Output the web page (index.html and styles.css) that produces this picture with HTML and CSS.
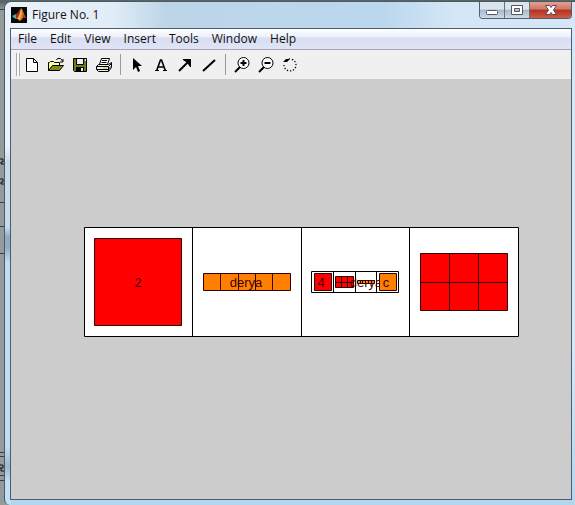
FILE: index.html
```html
<!DOCTYPE html>
<html lang="en">
<head>
<meta charset="utf-8">
<title>Figure No. 1</title>
<link rel="stylesheet" href="styles.css">
</head>
<body>
<div class="desktop">
  <svg class="backdrop" width="12" height="505" aria-hidden="true">
    <path d="M0 9.500H4M0 202.500H4M0 226.500H4M0 253.500H4M0 452.500H4M0 456.500H4M0 475.500H4M0 480.500H4" stroke="#3a3f42"/>
    <path d="M0 159h3v3h-2v2h3M0 179h3v3h-2v2h3M0 465h3v3h-3M1 468v3h3" fill="none" stroke="#111"/>
  </svg>
  <main class="window">
    <header class="titlebar">
      <svg class="logo" width="16" height="16" viewBox="0 0 16 16" aria-hidden="true">
        <path d="M0 0h16v16H0z" fill="#080808"/>
        <path d="M1 9l4-2 2 1-2 4-2-1z" fill="#4fa6ad"/>
        <path d="M5 7c2-1 3-4 5-6l-2 8-3 3z" fill="#8e3522"/>
        <path d="M10 1c2 2 3 7 5 10-2-1-3-1-4 1-1 1-2 2-3 2 0-2-1-2-3-2 3-2 4-7 5-11z" fill="#e8822b"/>
        <path d="M10 2c1 2 0 8-2 11l-1-2c2-2 2-6 3-9z" fill="#f5bd55"/>
        <path d="M11 3c1 3 2 6 4 8-2-1-3-1-4 1 1-3 1-6 0-9z" fill="#b83c20"/>
      </svg>
      <h1 class="title">Figure No. 1</h1>
      <div class="controls">
        <button class="control" aria-label="Minimize"><svg width="14" height="14" viewBox="0 0 14 14"><rect x="1.500" y="7.500" width="11" height="4" rx="1" fill="#fff" stroke="#535666"/></svg></button>
        <button class="control" aria-label="Maximize"><svg width="14" height="14" viewBox="0 0 14 14"><path fill-rule="evenodd" d="M1.500 2.500h11v9h-11zM4.500 5.500v3h5v-3z" fill="#fff" stroke="#535666"/></svg></button>
        <button class="control close" aria-label="Close"><svg width="14" height="14" viewBox="0 0 14 14"><path d="M1.500 2.500h4L7 4.500l1.500-2h4L9.500 7l3 4.500h-4L7 9.500l-1.500 2h-4L4.500 7z" fill="#fff" stroke="#63474a"/></svg></button>
      </div>
    </header>
    <div class="client">
      <nav class="menu">
        <button class="item">File</button>
        <button class="item">Edit</button>
        <button class="item">View</button>
        <button class="item">Insert</button>
        <button class="item">Tools</button>
        <button class="item">Window</button>
        <button class="item">Help</button>
      </nav>
      <div class="toolbar" role="toolbar" aria-label="Figure tools">
        <span class="grip"></span>
        <div class="group">
          <button class="tool" aria-label="New"><svg width="16" height="16" viewBox="0 0 16 16"><path d="M2.500 1.500h7l4 4v9h-11z" fill="#fff" stroke="#000"/><path d="M9.500 1.500v4h4" fill="none" stroke="#000"/></svg></button>
          <button class="tool" aria-label="Open"><svg width="16" height="16" viewBox="0 0 16 16"><path d="M.5 13.500v-8h1l1-1h3l1 1h5v3" fill="#ffff9c" stroke="#000"/><path d="M.5 13.500l4-5h11l-4 5z" fill="#8a8a18" stroke="#000"/><path d="M8.500 3l1-1.500h3l2 2.500M15 2v3h-3" fill="none" stroke="#000"/></svg></button>
          <button class="tool" aria-label="Save"><svg width="16" height="16" viewBox="0 0 16 16"><path d="M1.500 1.500h13v13h-12l-1-1z" fill="#77771c" stroke="#000"/><path d="M4.500 1.500h7v6h-7z" fill="#eee" stroke="#000"/><path d="M4 10h8v5H4z" fill="#000"/><path d="M9 11h2v3H9zM13 2h1v2h-1z" fill="#eee"/></svg></button>
          <button class="tool" aria-label="Print"><svg width="16" height="16" viewBox="0 0 16 16"><path d="M3.500 7.500l2-6h8l-2 6" fill="#fff" stroke="#000"/><path d="M6 3.500h5M5.500 5.500h5" stroke="#000"/><path d="M.5 9.500l2-2h10l3-2v5l-3 4h-10l-2-2z" fill="#eee" stroke="#000"/><path d="M.5 9.500h12l3-3M1 12.500h11l3-3M12.500 10v4" fill="none" stroke="#000"/><path d="M7 11h4" stroke="#c5c52c"/></svg></button>
        </div>
        <span class="separator"></span>
        <div class="group">
          <button class="tool" aria-label="Select"><svg width="16" height="16" viewBox="0 0 16 16"><path d="M4 1v12l3-3 2 5 2-1-2-5h4z"/></svg></button>
          <button class="tool" aria-label="Text"><svg width="16" height="16" viewBox="0 0 16 16"><path d="M3.500 14L7.500 3h1L12.500 14M5 10h6" fill="none" stroke="#000" stroke-width="1.600"/><path d="M2 13h4v1H2zM10 13h4v1h-4z"/></svg></button>
          <button class="tool" aria-label="Arrow"><svg width="16" height="16" viewBox="0 0 16 16"><path d="M2 14L12 4" stroke="#000" stroke-width="2"/><path d="M6 2h8v8h-1l-2-3-2-2-3-2z"/></svg></button>
          <button class="tool" aria-label="Line"><svg width="16" height="16" viewBox="0 0 16 16"><path d="M2 14L14 3" stroke="#000" stroke-width="2"/></svg></button>
        </div>
        <span class="separator"></span>
        <div class="group">
          <button class="tool" aria-label="Zoom in"><svg width="16" height="16" viewBox="0 0 16 16"><circle cx="9.500" cy="6" r="5.500" fill="#fff" stroke="#000"/><path d="M1 15l5-5" stroke="#000" stroke-width="2"/><path d="M6.500 6h6M9.500 3v6" stroke="#000" stroke-width="2"/></svg></button>
          <button class="tool" aria-label="Zoom out"><svg width="16" height="16" viewBox="0 0 16 16"><circle cx="9.500" cy="6" r="5.500" fill="#fff" stroke="#000"/><path d="M1 15l5-5" stroke="#000" stroke-width="2"/><path d="M6.500 6h6" stroke="#000" stroke-width="2"/></svg></button>
          <button class="tool" aria-label="Rotate"><svg width="16" height="16" viewBox="0 0 16 16"><path d="M4 3.500A6 6 0 1 1 2 8" fill="none" stroke="#000" stroke-width="1.300" stroke-dasharray="1.300 1.800"/><path d="M1 5l3-3h3v1L5 5z"/></svg></button>
        </div>
      </div>
      <section class="figure">
        <svg class="plot" width="435" height="110" viewBox="0 0 435 110" role="img" aria-label="Figure drawing">
          <g class="panel">
            <path d="M.5.5h434v109H.5zM108.500.5v109M217.500.5v109M325.500.5v109"/>
            <path d="M227.500 44.500h87v21h-87zM249.500 44.500v21M271.500 44.500v21M292.500 44.500v21"/>
          </g>
          <g class="red">
            <path d="M10.500 11.500h87v87h-87z"/>
            <path d="M230.500 46.500h17v17h-17z"/>
            <path d="M251.500 49.500h18v11h-18zM257.500 49.500v11M263.500 49.500v11M251.500 55.500h18"/>
            <path d="M336.500 26.500h87v57h-87zM365.500 26.500v57M394.500 26.500v57M336.500 55.500h87"/>
          </g>
          <path class="orange" d="M119.500 46.500h87v17h-87zM136.500 46.500v17M154.500 46.500v17M171.500 46.500v17M188.500 46.500v17"/>
          <text class="label" x="282" y="60">derya</text>
          <path class="orange" d="M273.500 53.500h17v3h-17zM276.500 53v4M278.500 53v4M281.500 53v4M284.500 53v4M287.500 53v4"/>
          <path class="orange" d="M295.500 46.500h17v17h-17z"/>
          <text class="label" x="54" y="60">2</text>
          <text class="label" x="162" y="60">derya</text>
          <text class="label" x="237" y="60">4</text>
          <text class="label" x="302" y="60">c</text>
        </svg>
      </section>
    </div>
  </main>
</div>
</body>
</html>
```
FILE: styles.css
```css
* { box-sizing: border-box; }

body {
  margin: 0;
  font: 12px/16px "Open Sans", "Noto Sans", sans-serif;
  color: #111;
}

button {
  margin: 0;
  padding: 0;
  border: 0;
  background: none;
  font: inherit;
  color: inherit;
}

svg { display: block; }

.desktop {
  position: relative;
  display: flex;
  min-height: 100vh;
  padding: 1px 0 0 4px;
  overflow: hidden;
  background: linear-gradient(#596668 0 2px, #959a9c 10px);
}

.backdrop {
  position: absolute;
  left: 0;
  top: 0;
}

.window {
  position: relative;
  flex: 1;
  display: flex;
  flex-direction: column;
  padding: 0 3px 5px 5px;
  border: solid #4d5961;
  border-width: 1px 0 0 1px;
  border-radius: 7px 0 0 6px;
  background:
    linear-gradient(#e9f3fc 0 145px, #c5dcef 160px 225px, #91abc7 235px 245px, #bfdcf4 260px 445px, #9db8ce 465px, #c0e0f7 480px) left / 6px 100% no-repeat,
    linear-gradient(to right, #eaf2f9, #e0ecf7 110px, #bdd5e9 160px, #bbd7ee 380px, #d5e7f6 450px, #d5e7f6) top / 100% 26px no-repeat,
    linear-gradient(#d5e8f6 0 70%, #b2d6ee);
}

.titlebar {
  display: flex;
  align-items: center;
  gap: 5px;
  height: 26px;
  padding-left: 1px;
}

.title {
  flex: 1;
  margin: 0;
  font-size: 12px;
  font-weight: 400;
}

.controls {
  display: flex;
  align-self: flex-start;
  height: 17px;
  border: 1px solid #555e6c;
  border-top: 0;
  border-radius: 0 0 4px 4px;
  overflow: hidden;
}

.control {
  display: flex;
  justify-content: center;
  align-items: center;
  width: 25px;
  border-right: 1px solid #67717f;
  background: linear-gradient(#dce4ed 0 45%, #a9b7c7 50%, #cbdae8);
}

.close {
  width: 41px;
  border: 0;
  background: linear-gradient(#e0a295, #cf7767 45%, #b3301c 50%, #cc5e48);
}

.client {
  flex: 1;
  display: flex;
  flex-direction: column;
  border: 1px solid #4c5c70;
}

.menu {
  display: flex;
  gap: 13px;
  height: 21px;
  padding: 0 7px;
  border-bottom: 1px solid #a5a4bd;
  background: linear-gradient(#fff, #eceffa 40%, #d8def1 45%, #e0e4f5);
}

.toolbar {
  display: flex;
  align-items: center;
  height: 29px;
  padding-left: 5px;
  background: #f0f0f0;
}

.grip {
  width: 4px;
  height: 23px;
  border: solid #aaa;
  border-width: 0 1px;
  background: #fafafa;
}

.group { display: flex; }

.tool {
  display: flex;
  justify-content: center;
  align-items: center;
  width: 24px;
  height: 24px;
}

.separator {
  width: 1px;
  height: 21px;
  margin: 0 4px;
  background: #999;
}

.figure {
  flex: 1;
  display: flex;
  justify-content: center;
  align-items: center;
  padding: 0 0 15px 20px;
  background: #ccc;
}

.plot { flex: none; }
.panel { fill: #fff; stroke: #000; }
.red { fill: #f00; stroke: #300; }
.orange { fill: #ff8000; stroke: #300; }

.label {
  font: 13px "Liberation Sans", sans-serif;
  fill: #400;
  text-anchor: middle;
}
```
